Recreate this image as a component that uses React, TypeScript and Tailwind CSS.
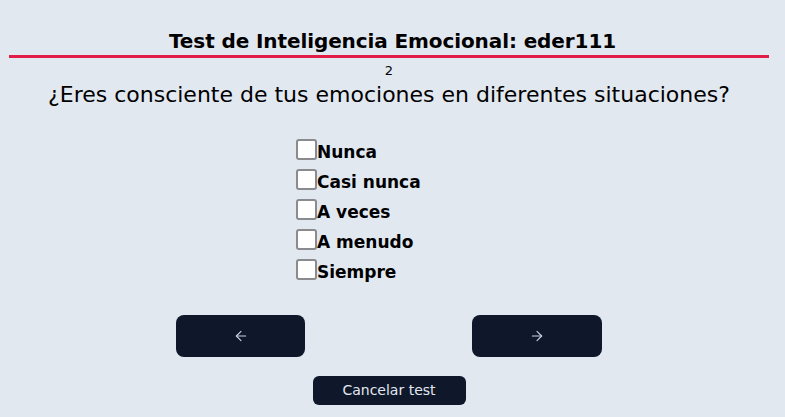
const options = ["Nunca", "Casi nunca", "A veces", "A menudo", "Siempre"];

export default function App() {
  return (
    <div className="min-h-[417px] w-full bg-[#e2e8f0] text-black font-['DejaVu_Sans',sans-serif]">
      <div className="flex justify-center pt-[27px]">
        <h1 className="text-[20px] leading-[28px] font-bold tracking-[-0.1px]">
          Test de Inteligencia Emocional: eder111
        </h1>
      </div>
      <div className="ml-[9px] mr-[16px] h-[3px] bg-[#e11d48]" />
      <div className="flex flex-col items-center pr-[7px]">
        <span className="text-[13px] leading-[18px] mt-[4px]">2</span>
        <p className="text-[22px] leading-[28px] mt-[1px]">
          ¿Eres consciente de tus emociones en diferentes situaciones?
        </p>
        <div className="w-[186px] flex flex-col gap-[10px] mt-[30px]">
          {options.map((o) => (
            <label key={o} className="flex items-center h-[20px]">
              <span className="w-[21px] h-[21px] bg-white border-2 border-[#8a8a8f] rounded-[3px] shrink-0" />
              <span className="text-[17px] font-bold leading-[20px] mt-[5px]">{o}</span>
            </label>
          ))}
        </div>
        <div className="flex gap-[167px] mt-[36px]">
          <button className="w-[129px] h-[42px] rounded-lg bg-[#0f172a] text-[#cbd5e1] flex items-center justify-center">
            <svg width="16" height="16" viewBox="0 0 24 24" fill="none" stroke="currentColor" strokeWidth="1.6" strokeLinecap="round" strokeLinejoin="round">
              <path d="M19 12H5" />
              <path d="M12 19l-7-7 7-7" />
            </svg>
          </button>
          <button className="w-[130px] h-[42px] rounded-lg bg-[#0f172a] text-[#cbd5e1] flex items-center justify-center">
            <svg width="16" height="16" viewBox="0 0 24 24" fill="none" stroke="currentColor" strokeWidth="1.6" strokeLinecap="round" strokeLinejoin="round">
              <path d="M5 12h14" />
              <path d="M12 5l7 7-7 7" />
            </svg>
          </button>
        </div>
        <button className="mt-[19px] w-[153px] h-[29px] rounded-md bg-[#0f172a] text-[#e2e8f0] text-[14px]">
          Cancelar test
        </button>
      </div>
    </div>
  );
}
